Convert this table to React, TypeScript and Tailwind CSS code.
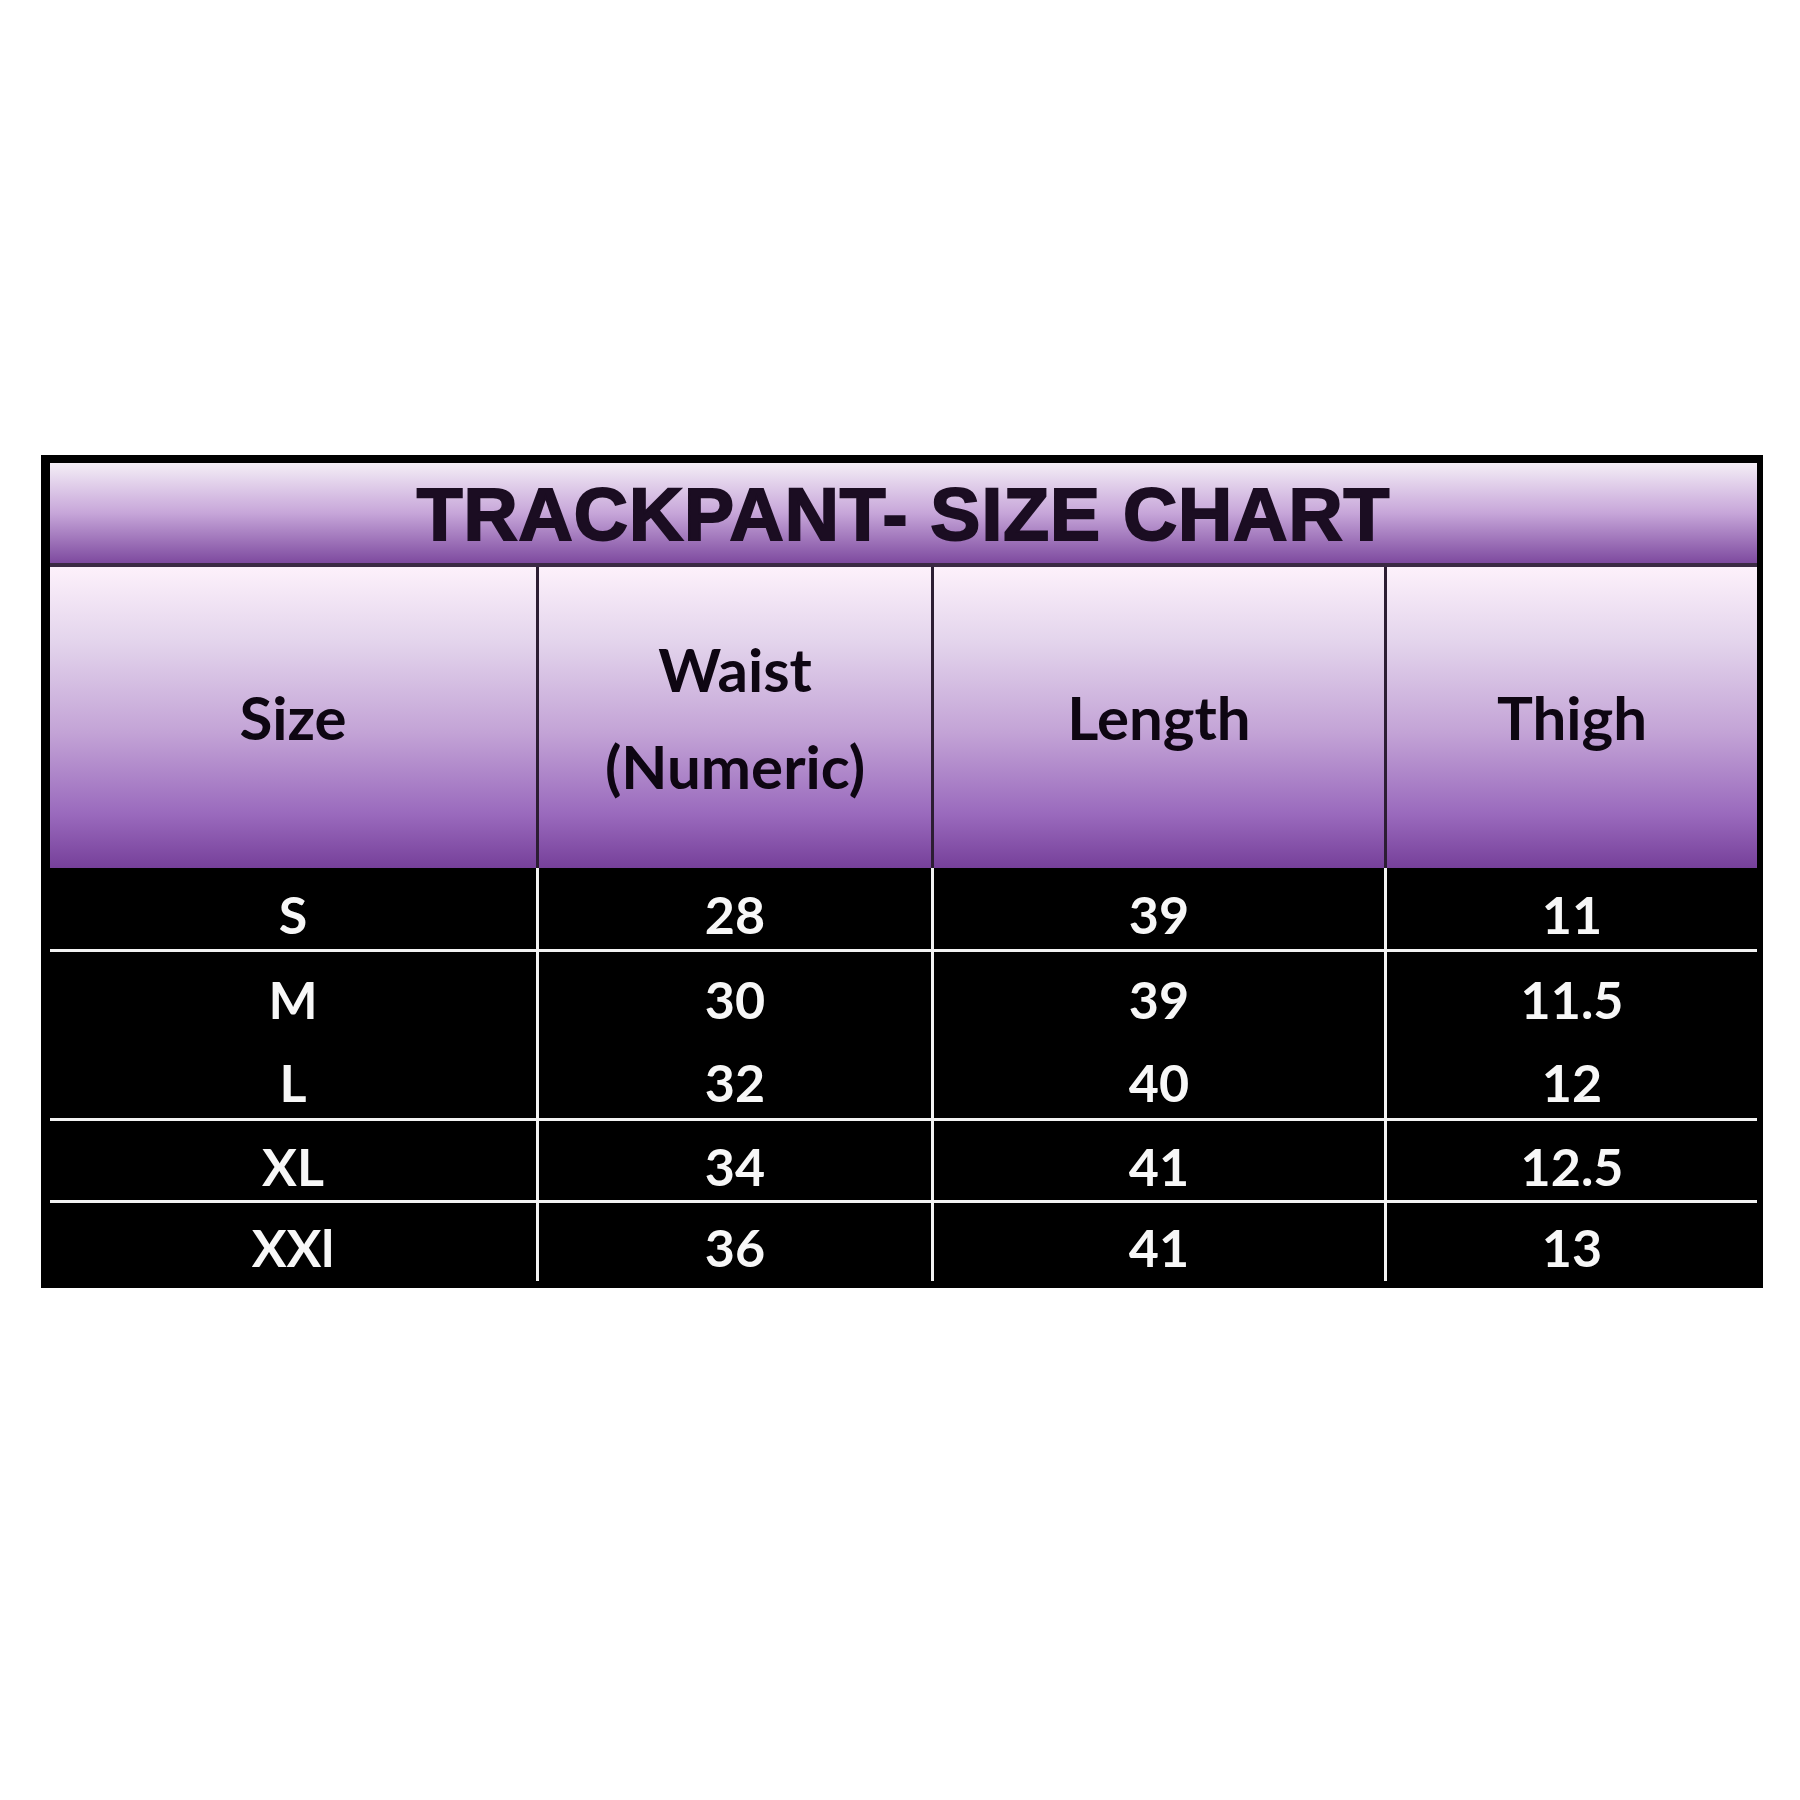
const columns = ["Size", "Waist\n(Numeric)", "Length", "Thigh"];

const groups: string[][][] = [
  [["S", "28", "39", "11"]],
  [
    ["M", "30", "39", "11.5"],
    ["L", "32", "40", "12"],
  ],
  [["XL", "34", "41", "12.5"]],
  [["XXl", "36", "41", "13"]],
];

const groupHeights = ["h-[81px]", "h-[83px]", "h-[79px]", "h-[78px]"];

const gridCols = "grid grid-cols-[489px_395px_453px_370px]";

function BodyGroup({ rows, rowHeight }: { rows: string[][]; rowHeight: string }) {
  return (
    <div className={gridCols}>
      {[0, 1, 2, 3].map((col) => (
        <div key={col} className={col < 3 ? "border-r-[3px] border-[#f2f2f2]" : ""}>
          {rows.map((row, i) => (
            <div key={i} className={`flex items-center justify-center pt-[10px] ${rowHeight}`}>
              <span className="font-['Lato',sans-serif] text-[52px] font-bold leading-none text-[#f7f7f7]">{row[col]}</span>
            </div>
          ))}
        </div>
      ))}
    </div>
  );
}

export default function App() {
  return (
    <div className="h-[1800px] w-[1800px] bg-white pt-[455px] pl-[41px]">
      <div className="w-[1722px] bg-black pt-[8px] pr-[6px] pb-[7px] pl-[9px]">
        {/* title band */}
        <div className="flex h-[104px] items-center justify-center border-b-4 border-[#3b2a44] bg-gradient-to-b from-[#f4eef6] via-[#c7a6d9] to-[#7e4a9f] pt-[2px]">
          <h1 className="font-['Liberation_Sans',sans-serif] text-[75px] font-black leading-none tracking-[1px] text-[#1b0d22] [-webkit-text-stroke:2px_#1b0d22]">
            TRACKPANT- SIZE CHART
          </h1>
        </div>

        {/* column headers */}
        <div className={gridCols}>
          {columns.map((label, i) => (
            <div
              key={label}
              className={`flex h-[301px] items-center justify-center bg-[linear-gradient(to_bottom,#fdf1fb_0%,#e3d4ec_25%,#c3a3d6_55%,#9a6abd_82%,#76409a_100%)] ${
                i < 3 ? "border-r-[3px] border-[#2c1d33]" : ""
              }`}
            >
              <span className="whitespace-pre-line text-center font-['Lato',sans-serif] text-[60px] font-bold leading-[97px] text-[#0e0612]">
                {label}
              </span>
            </div>
          ))}
        </div>

        {/* body */}
        {groups.map((rows, g) => (
          <div key={g}>
            {g > 0 && <div className="h-[3px] bg-[#f2f2f2]" />}
            <BodyGroup rows={rows} rowHeight={groupHeights[g]} />
          </div>
        ))}
      </div>
    </div>
  );
}
